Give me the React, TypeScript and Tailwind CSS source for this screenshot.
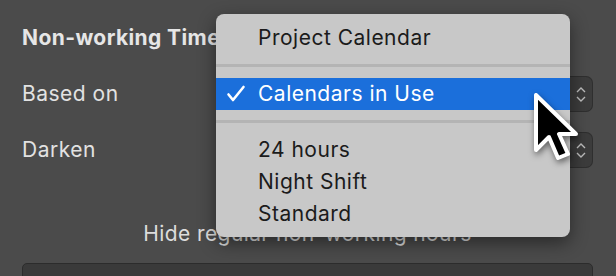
import React from 'react'

const font = { fontFamily: 'Inter, "Liberation Sans", sans-serif' }

function Stepper() {
  return (
    <div className="w-[24px] h-[36px] rounded-r-[7px] bg-[#3c3c3c] border border-[#2f2f2f] border-l-0 flex flex-col items-center justify-center gap-[3px]">
      <svg width="10" height="6" viewBox="0 0 10 6">
        <path d="M1 5 L5 1 L9 5" stroke="#bdbdbd" strokeWidth="1.4" fill="none" />
      </svg>
      <svg width="10" height="6" viewBox="0 0 10 6">
        <path d="M1 1 L5 5 L9 1" stroke="#bdbdbd" strokeWidth="1.4" fill="none" />
      </svg>
    </div>
  )
}

function Row({ label }: { label: string }) {
  return (
    <div className="flex items-center h-[36px]">
      <span className="text-[21px] tracking-[0.5px] text-[#e2e2e2] w-[208px]">{label}</span>
      <div className="flex-1 flex justify-end">
        <div className="h-[36px] flex-1 rounded-l-[7px] bg-[#5a5a5a]" />
        <Stepper />
      </div>
    </div>
  )
}

function MenuItem({ text }: { text: string }) {
  return (
    <div className="h-[32px] flex items-center pl-[42px] text-[21px] tracking-[0.5px] text-[#1b1b1b]">{text}</div>
  )
}

export default function App() {
  return (
    <div className="relative w-[616px] h-[276px] overflow-hidden bg-[#4b4b4b]" style={font}>
      <div className="pl-[22px] pr-[23px] pt-[24px]">
        <div className="h-[28px] flex items-center text-[21px] tracking-[0.4px] font-bold text-[#e6e6e6] whitespace-nowrap">Non-working Time</div>
        <div className="mt-[24px] flex flex-col gap-[20px]">
          <Row label="Based on" />
          <Row label="Darken" />
        </div>
        <div className="mt-[54px] h-[24px] flex items-center justify-center text-[21px] tracking-[0.4px] text-[#dcdcdc] whitespace-nowrap">
          Hide regular non-working hours
        </div>
        <div className="mt-[17px] h-[40px] rounded-t-[5px] bg-[#3a3a3a] border border-[#2c2c2c]" />
      </div>

      <div className="absolute left-[216px] top-[14px] w-[354px] h-[223px] rounded-[8px] bg-[#c8c8c8] shadow-[0_6px_18px_rgba(0,0,0,0.45)] pt-[8px]">
        <MenuItem text="Project Calendar" />
        <div className="mt-[10px] h-[3px] bg-[#b4b4b4]" />
        <div className="mt-[11px] h-[32px] flex items-center bg-[#1b6fdb] text-white text-[21px] tracking-[0.5px]">
          <svg width="42" height="20" viewBox="0 0 42 20" className="shrink-0">
            <path d="M12.5 10.5 L17 16 L27.5 3" stroke="#fff" strokeWidth="2.6" fill="none" strokeLinecap="round" strokeLinejoin="round" />
          </svg>
          <span>Calendars in Use</span>
        </div>
        <div className="mt-[10px] h-[3px] bg-[#b4b4b4]" />
        <div className="mt-[11px]">
          <MenuItem text="24 hours" />
          <MenuItem text="Night Shift" />
          <MenuItem text="Standard" />
        </div>
      </div>

      <svg className="absolute left-[532px] top-[91px]" width="52" height="72" viewBox="0 0 52 72" style={{ filter: 'drop-shadow(1px 3px 3px rgba(0,0,0,0.5))' }}>
        <path d="M4 4 L4 59 L17 46 L26 67 L36 63 L27 43 L44 43 Z" fill="#000" stroke="#fff" strokeWidth="4" strokeLinejoin="round" />
      </svg>
    </div>
  )
}
